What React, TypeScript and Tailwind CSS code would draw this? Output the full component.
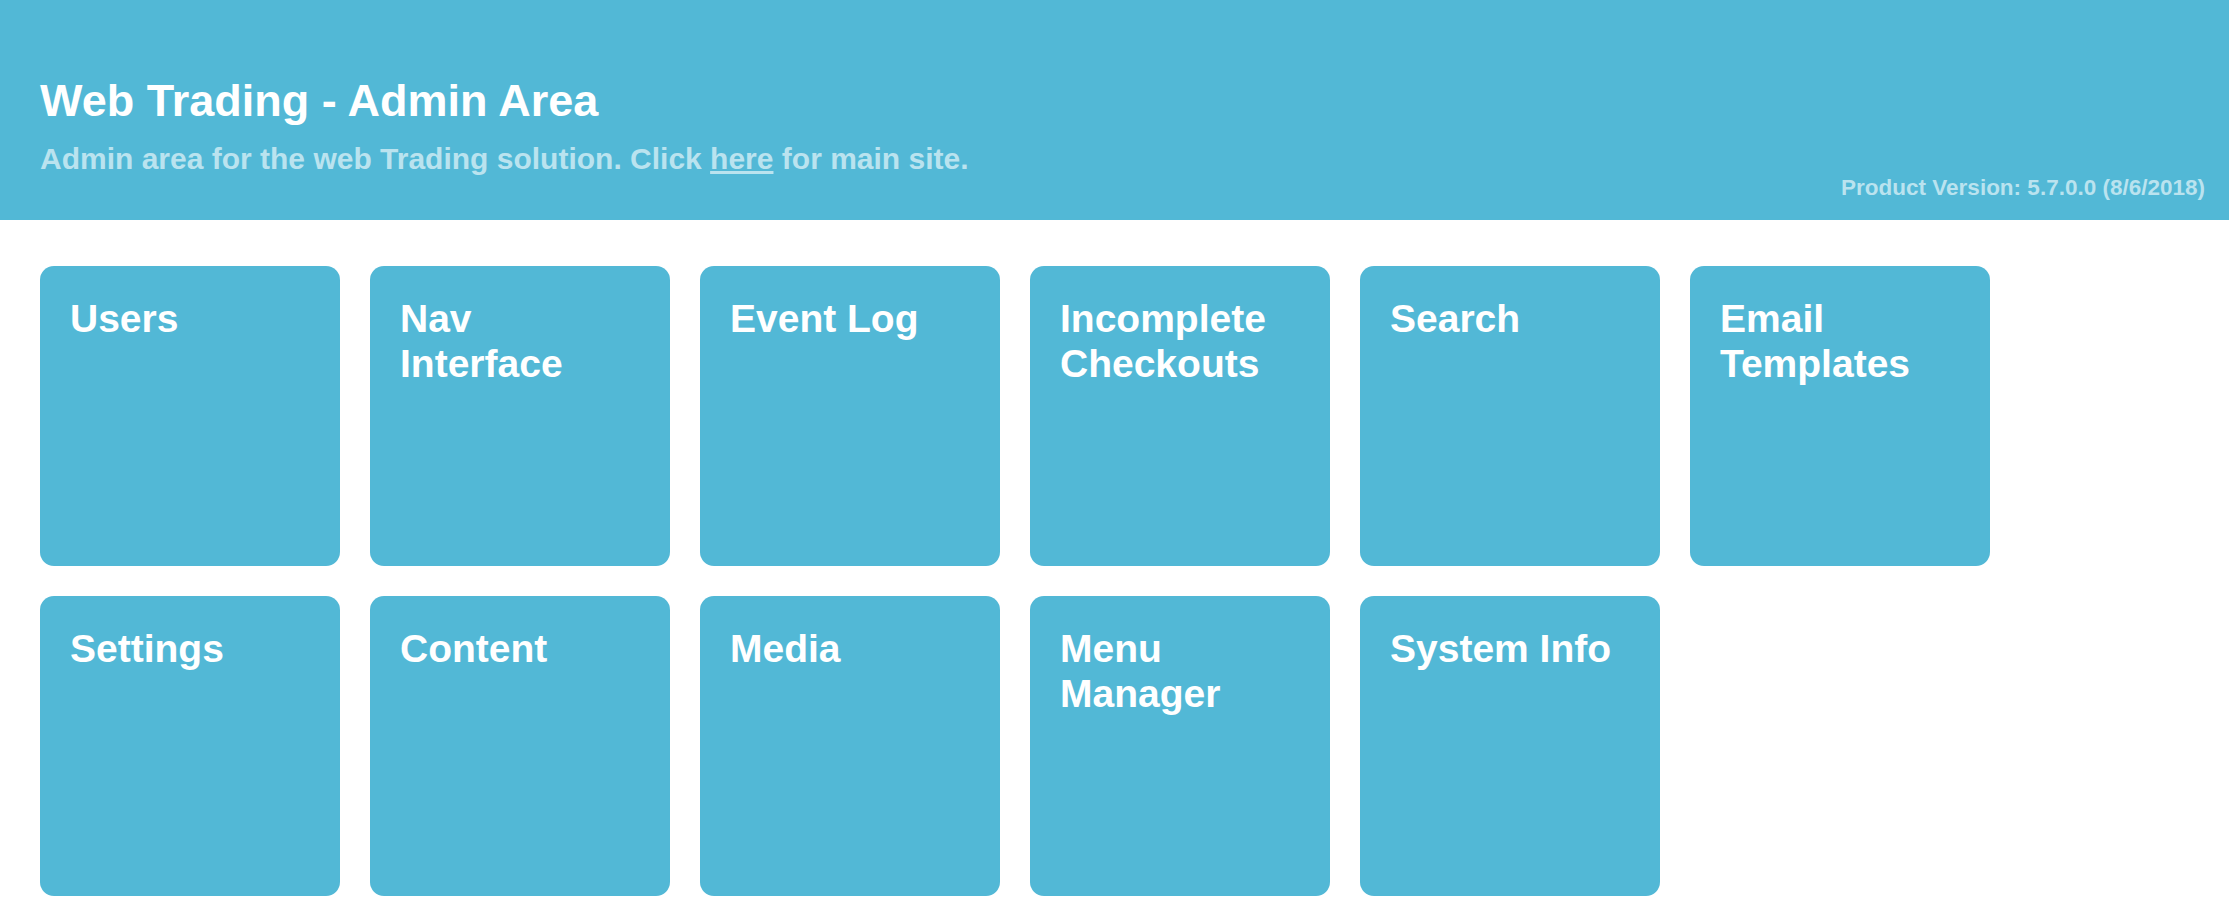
const tiles = [
  "Users",
  "Nav Interface",
  "Event Log",
  "Incomplete Checkouts",
  "Search",
  "Email Templates",
  "Settings",
  "Content",
  "Media",
  "Menu Manager",
  "System Info",
];

export default function App() {
  return (
    <div className="min-h-[918px] bg-white font-[family-name:'Liberation_Sans',Arial,sans-serif] font-bold">
      <header className="h-[220px] bg-[#52b8d6] pl-10 pr-6 pt-[75px]">
        <h1 className="text-[45px] leading-[1.149] text-white">Web Trading - Admin Area</h1>
        <p className="mt-[15px] text-[30px] leading-[1.149] text-[#bae3ef]">
          Admin area for the web Trading solution. Click{" "}
          <a href="#" className="underline">
            here
          </a>{" "}
          for main site.
        </p>
        <p className="-mt-px text-right text-[22.5px] leading-[1.149] text-[#bae3ef]">
          Product Version: 5.7.0.0 (8/6/2018)
        </p>
      </header>

      <main className="grid grid-cols-[repeat(6,300px)] gap-[30px] px-10 pt-[46px]">
        {tiles.map((name) => (
          <a
            key={name}
            href="#"
            className="h-[300px] w-[300px] rounded-[14px] bg-[#52b8d6] py-[30px] pl-[30px] pr-[45px] text-[39px] leading-[45px] text-white"
          >
            {name}
          </a>
        ))}
      </main>
    </div>
  );
}
